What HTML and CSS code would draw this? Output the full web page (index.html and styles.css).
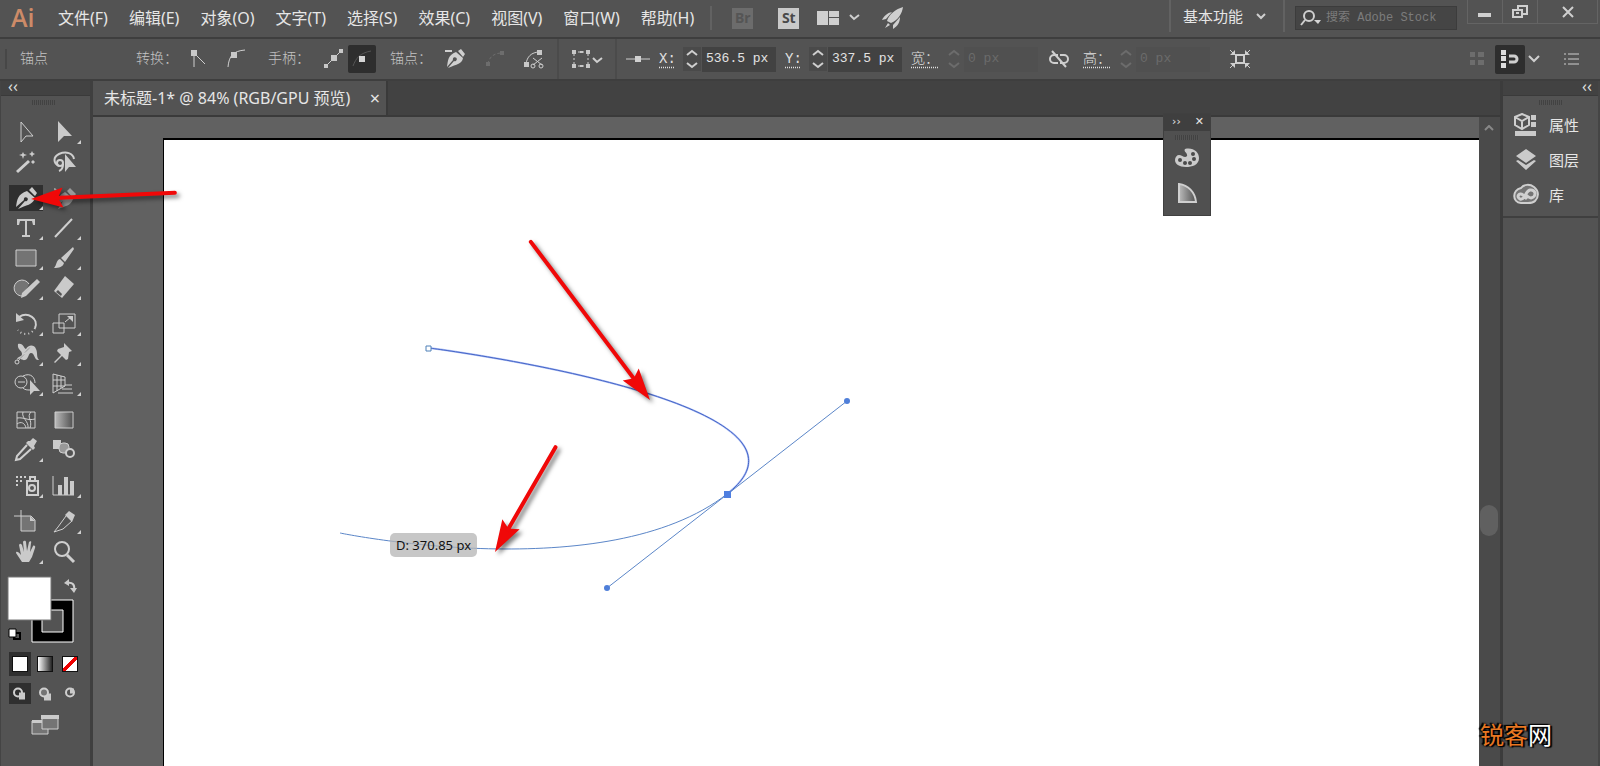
FILE: index.html
```html
<!DOCTYPE html>
<html lang="zh-CN">
<head>
<meta charset="utf-8">
<title>未标题-1</title>
<link rel="stylesheet" href="styles.css">
</head>
<body>
<header class="menubar">
  <div class="logo">Ai</div>
  <nav class="menus">
    <button>文件(F)</button><button>编辑(E)</button><button>对象(O)</button><button>文字(T)</button><button>选择(S)</button><button>效果(C)</button><button>视图(V)</button><button>窗口(W)</button><button>帮助(H)</button>
  </nav>
  <div class="apps">
    <button class="app dim">Br</button>
    <button class="app">St</button>
    <button class="arrange" aria-label="排列文档"><svg width="44" height="20" viewBox="0 0 44 20"><path fill="#cfcfcf" d="M0 3h11v14H0zM12 3h10v6H12zM12 10h10v7H12z"/><path class="ln w2" d="M33 7l4 4 5-4"/></svg></button>
    <button aria-label="GPU"><svg width="24" height="24" viewBox="0 0 24 24"><path fill="#cfcfcf" d="M22 1C15 3 8 8 6 15l4 2C17 14 21 8 22 1zM11 6c-5 1-8 4-10 8l4-1zM19 11l-7 8v4c5-3 7-7 7-12zM7 17l-3 5 5-3z"/></svg></button>
  </div>
  <div class="right">
    <button class="workspace">基本功能<svg width="12" height="8" viewBox="0 0 12 8"><path class="ln w2" d="M2 2l4 4 4-4"/></svg></button>
    <label class="search"><svg width="22" height="16" viewBox="0 0 22 16"><circle class="ln w2" cx="9" cy="6" r="5"/><path class="ln w2" d="M5 10l-4 5"/><path fill="#d5d5d5" d="M14 10h7l-3 4z"/></svg><input placeholder="搜索 Adobe Stock" aria-label="搜索 Adobe Stock"></label>
    <div class="winbtns">
      <button aria-label="最小化"><svg width="14" height="14" viewBox="0 0 14 14"><path fill="#d0d0d0" d="M0 8h13v4H0z"/></svg></button>
      <button aria-label="还原"><svg width="16" height="14" viewBox="0 0 16 14"><path class="ln w2" d="M6 5V1h9v8h-4M1 5h9v7H1zM4 8h3"/></svg></button>
      <button class="close" aria-label="关闭"><svg width="12" height="12" viewBox="0 0 12 12"><path class="ln w2" d="M1 1l10 10M11 1L1 11"/></svg></button>
    </div>
  </div>
</header>

<section class="control">
  <span class="mode">锚点</span>
  <span class="label">转换：</span>
  <button class="b22" aria-label="尖角"><svg width="22" height="22" viewBox="0 0 22 22"><path fill="#c8c8c8" d="M3 2h6v6H3z"/><path class="ln" d="M6 8v11M8 7l9 9"/></svg></button>
  <button class="b36" aria-label="平滑"><svg width="22" height="22" viewBox="0 0 22 22"><path class="ln" d="M3 19C4 8 8 3 20 2"/><path fill="#c8c8c8" d="M6 4h6v6H6z"/></svg></button>
  <span class="label">手柄：</span>
  <button class="b28" aria-label="显示手柄"><svg width="22" height="22" viewBox="0 0 22 22"><path class="ln" d="M3 18L18 3"/><path fill="#c8c8c8" d="M8 7h6v6H8zM16 1h4v4h-4zM1 16h4v4H1z"/></svg></button>
  <button class="b28 on" aria-label="隐藏手柄"><svg width="22" height="22" viewBox="0 0 22 22"><path fill="none" stroke="#555" d="M2 18C5 10 9 5 20 3"/><path fill="#d5d5d5" d="M8 8h6v6H8z"/></svg></button>
  <span class="label anchors">锚点：</span>
  <button class="b40" aria-label="删除锚点"><svg width="22" height="22" viewBox="0 0 22 22"><path fill="#cfcfcf" d="M1 2h7v2H1zM14 3l3-2 4 5-2 3zM12 4l7 6c-1 6-6 6-15 10l6-7a2 2 0 1 0-1-1l-6 7C4 12 4 7 12 4z"/></svg></button>
  <button class="b38" aria-label="连接端点"><svg width="20" height="20" viewBox="0 0 20 20"><path fill="none" stroke="#6d6d6d" stroke-dasharray="3 2" d="M3 15C4 8 9 4 17 4"/><path fill="#6d6d6d" d="M1 13h4v4H1zM15 2h4v4h-4z"/></svg></button>
  <button class="b38" aria-label="剪切路径"><svg width="22" height="22" viewBox="0 0 22 22"><path class="ln" d="M3 16C4 9 8 4 17 4M10 10l9 7M19 10l-9 7"/><path fill="#c8c8c8" d="M14 2h5v5h-5zM1 14h5v5H1z"/><circle class="ln" cx="10" cy="18" r="2"/><circle class="ln" cx="18" cy="18" r="2"/></svg></button>
  <button class="b60 bordered" aria-label="隔离"><svg width="32" height="22" viewBox="0 0 32 22"><path class="ln" stroke-dasharray="2 2" d="M3 4h14v14H3z"/><path fill="#c8c8c8" d="M1 2h4v4H1zM15 2h4v4h-4zM1 16h4v4H1zM15 16h4v4h-4zM9 3h3v2H9zM9 17h3v2H9z"/><path class="ln w2" d="M22 10l4 4 5-4"/></svg></button>
  <span class="b40 ref"><svg width="24" height="10" viewBox="0 0 24 10"><path class="ln" d="M0 5h24"/><path fill="#d0d0d0" d="M9 2h6v6H9z"/></svg></span>
  <div class="field"><label for="x">X:</label><svg width="18" height="24" viewBox="0 0 18 24"><path class="ln w2" d="M4 8l5-4 5 4M4 16l5 4 5-4"/></svg><input id="x" value="536.5 px"></div>
  <div class="field"><label for="y">Y:</label><svg width="18" height="24" viewBox="0 0 18 24"><path class="ln w2" d="M4 8l5-4 5 4M4 16l5 4 5-4"/></svg><input id="y" value="337.5 px"></div>
  <div class="field off"><label for="w">宽：</label><svg width="18" height="24" viewBox="0 0 18 24"><path class="ln w2" d="M4 8l5-4 5 4M4 16l5 4 5-4"/></svg><input id="w" value="0 px" disabled></div>
  <button class="b36 link" aria-label="约束比例"><svg width="20" height="18" viewBox="0 0 20 18"><path class="ln w2" d="M9 5H5a4 4 0 0 0 0 8h4M11 5h4a4 4 0 0 1 0 8h-4M3 1l14 16"/></svg></button>
  <div class="field off"><label for="h">高：</label><svg width="18" height="24" viewBox="0 0 18 24"><path class="ln w2" d="M4 8l5-4 5 4M4 16l5 4 5-4"/></svg><input id="h" value="0 px" disabled></div>
  <button class="b36 isolate" aria-label="变换"><svg width="22" height="20" viewBox="0 0 22 20"><path class="ln w2" d="M7 6h8v8H7z"/><path class="ln" d="M1 1l4 4M21 1l-4 4M1 19l4-4M21 19l-4-4"/><path fill="#d0d0d0" d="M6 1v5H1zM16 1v5h5zM6 19v-5H1zM16 19v-5h5z"/></svg></button>
  <div class="ctlend">
    <button class="b28" aria-label="对齐网格"><svg width="18" height="18" viewBox="0 0 18 18"><path fill="#6d6d6d" d="M2 2h5v5H2zM10 2h6v5h-6zM2 10h5v5H2zM10 10h6v5h-6z"/></svg></button>
    <button class="snap on" aria-label="对齐像素"><svg width="20" height="20" viewBox="0 0 20 20"><path fill="#ddd" d="M1 1h5v5H1zM1 7h5v5H1zM1 14h5v5H1z"/><path class="ln w3" d="M9 7h5a3 3 0 0 1 0 6H9"/></svg></button>
    <svg width="12" height="8" viewBox="0 0 12 8"><path class="ln w2" d="M1 1l5 5 5-5"/></svg>
    <button class="list" aria-label="面板菜单"><svg width="16" height="14" viewBox="0 0 16 14"><path class="ln" d="M4 2h11M4 7h11M4 12h11M0 2h2M0 7h2M0 12h2"/></svg></button>
  </div>
</section>

<main class="main">
  <aside class="tools">
    <div class="dockhead">‹‹</div>
    <div class="grip"></div>
    <div class="toolgrid">
      <button><svg viewBox="0 0 38 30"><path class="ln" d="M14 5v20l5-6h7z"/></svg></button>
      <button class="more"><svg viewBox="0 0 38 30"><path class="fl" d="M13 4v21l6-6h8z"/></svg></button>
      <button><svg viewBox="0 0 38 30"><path class="ln w3" d="M10 25l12-11"/><path class="fl" d="M16 5l1 2 3 1-3 1-1 3-1-3-3-1 3-1zM25 4l1 2 2 1-2 1-1 2-1-2-2-1 2-1zM26 13l2 2-2 2-2-2z"/></svg></button>
      <button><svg viewBox="0 0 38 30"><path class="ln w2" d="M14 19c-6-3-6-9 0-12 7-3 14-1 15 5"/><circle class="ln w2" cx="15" cy="16" r="3"/><path class="ln w2" d="M18 17c0 4-1 6-4 7"/><path class="fl" d="M20 7v18l4-5h7z"/></svg></button>
    </div>
    <div class="toolgrid">
      <button class="more active"><svg viewBox="0 0 38 30"><path class="fl" d="M22 7l3-3 5 6-2 3zM20 8l8 7c-2 7-9 7-17 11l7-8a2 2 0 1 0-1-1l-8 7c1-8 2-13 11-16z"/></svg></button>
      <button><svg viewBox="0 0 38 30"><g opacity=".6"><path class="fl" d="M22 8l3-3 6 6-3 4zM20 9l8 7c-2 7-8 7-15 10l5-8-6 5c1-8 2-11 8-14z"/><path class="ln w2" d="M9 6c4 0 2 8-2 9"/></g></svg></button>
      <button class="more"><svg viewBox="0 0 38 30"><path class="fl" d="M10 6h18v6h-2l-1-4h-5v14h3v2h-8v-2h3V8h-5l-1 4h-2z"/></svg></button>
      <button class="more"><svg viewBox="0 0 38 30"><path class="ln w2" d="M10 24L27 6"/></svg></button>
      <button class="more"><svg viewBox="0 0 38 30"><path class="ln shade" d="M9 7h20v16H9z"/></svg></button>
      <button class="more"><svg viewBox="0 0 38 30"><path class="fl" d="M28 4l1 2-9 13-4-4zM15 16l4 4c-1 4-5 5-10 5 3-3 2-8 6-9z"/></svg></button>
      <button class="more"><svg viewBox="0 0 38 30"><path class="ln shade" d="M16 23a8 8 0 1 1 6-12"/><path class="fl" d="M30 6l3 3-14 14-5 2 1-5z"/></svg></button>
      <button class="more"><svg viewBox="0 0 38 30"><path class="fl" d="M20 3l9 8-12 14-8-7z"/><path class="hole" d="M13 17l4 4-1 2-5-4z"/></svg></button>
    </div>
    <div class="toolgrid">
      <button class="more"><svg viewBox="0 0 38 30"><path class="ln w2" d="M12 8c9-6 20 2 16 11"/><path class="ln w2" stroke-dasharray="1 3" d="M28 19c-3 7-13 8-17 2"/><path class="fl" d="M9 4v9l8-2z"/></svg></button>
      <button class="more"><svg viewBox="0 0 38 30"><path class="ln" d="M14 5h16v14H14zM8 14h11v10H8zM20 13l6-5"/><path class="fl" d="M22 7h6v6z"/></svg></button>
      <button class="more"><svg viewBox="0 0 38 30"><path class="fl" d="M11 5c6-1 5 4 8 5 2-4 8-5 10 0 2 4 0 8 3 11-5 1-4-7-8-7-3 0-2 6-6 7-3 1-5-3-8 0 0-4 5-3 5-6 0-4-5-4-4-10z"/><path style="stroke:#535353" d="M12 21L23 8"/><path class="ln" d="M11 22L24 7"/><circle class="ln" cx="10" cy="23" r="2"/></svg></button>
      <button class="more"><svg viewBox="0 0 38 30"><path class="fl" d="M19 4l8 8-3 1-1 7-2 1-4-4-7 7-1-1 7-7-4-4 1-2 6-2z"/></svg></button>
      <button class="more"><svg viewBox="0 0 38 30"><circle class="ln" cx="14" cy="13" r="6"/><path class="ln" d="M16 7c8-4 12 2 12 7M16 19c2 2 4 2 7 2M11 13h7"/><path class="fl" d="M23 11v15l4-4h6z"/></svg></button>
      <button class="more"><svg viewBox="0 0 38 30"><path class="ln" d="M8 5v19M8 5l12 3v9L8 24M8 11h12M8 17h12M12 6v16M16 7v12M20 16h7M17 20h10M13 24h15"/></svg></button>
    </div>
    <div class="toolgrid">
      <button><svg viewBox="0 0 38 30"><path class="ln" d="M10 7h18v16H10z"/><path class="ln" d="M10 13c8-1 10 3 18 1M10 19c4-3 8-1 9 4M16 7c-2 6 6 9 5 16M24 7c-5 5 2 8-1 16"/></svg></button>
      <button><svg viewBox="0 0 38 30"><defs><linearGradient id="g"><stop stop-color="#bbb"/><stop offset="1" stop-color="#505050"/></linearGradient></defs><path stroke="#cfcfcf" fill="url(#g)" d="M10 7h18v16H10z"/></svg></button>
      <button class="more"><svg viewBox="0 0 38 30"><path class="fl" d="M23 6l3-3 4 3-3 5 1 2-2 2-7-7 2-2z"/><path class="ln w2" d="M20 10L10 21l-1 4 4-1 11-10"/></svg></button>
      <button><svg viewBox="0 0 38 30"><path class="fl" d="M8 5h8v9H8z"/><rect x="14" y="8" width="10" height="10" rx="4" fill="#999" stroke="#cfcfcf"/><circle class="ln w2 hole" cx="25" cy="18" r="4"/></svg></button>
    </div>
    <div class="toolgrid">
      <button class="more"><svg viewBox="0 0 38 30"><path class="ln w2" d="M20 10h11v14H20zM23 9V6h5v3"/><circle class="ln w2" cx="25" cy="17" r="3"/><path class="ln w2" stroke-dasharray="2 2" d="M9 6h10M9 10h8M9 14h3"/></svg></button>
      <button class="more"><svg viewBox="0 0 38 30"><path class="ln" d="M8 5v19h21"/><path class="fl" d="M13 14h4v10h-4zM19 6h4v18h-4zM25 10h4v14h-4z"/></svg></button>
    </div>
    <div class="toolgrid">
      <button><svg viewBox="0 0 38 30"><path class="ln shade" d="M14 9h10l4 4v11H14z"/><path class="ln" d="M14 3v6M7 9h7"/><path class="fl" d="M23 9v5h5z"/></svg></button>
      <button class="more"><svg viewBox="0 0 38 30"><path class="ln" d="M21 9L13 20l-4 5 9-3 9-8"/><path class="fl" d="M20 8l4-4 6 4-3 7z"/></svg></button>
      <button class="more"><svg viewBox="0 0 38 30"><path class="fl" d="M15 25l-6-9c0-2 2-2 5 2L12 8c1-2 2-1 3 0l2 7-1-10c1-2 3-1 3 0l1 9 2-9c1-1 3-1 2 1l-1 9 3-6c1-1 3 0 2 2l-3 9-3 5z"/></svg></button>
      <button><svg viewBox="0 0 38 30"><circle class="ln w2" cx="17" cy="12" r="7"/><path class="ln w3" d="M22 18l7 7"/></svg></button>
    </div>
    <svg class="swatches" viewBox="7 570 76 76" width="76" height="76"><path d="M32 600h41v42H32z" fill="#000" stroke="#fff"/><path d="M42 610h21v22H42z" fill="#535353" stroke="#fff"/><path fill="#fff" stroke="#777" d="M8 577h43v43H8z"/><path class="ln w2" d="M67 583c6-1 8 2 7 7"/><path class="fl" d="M64 583l5-4v7zM70 588h7l-3 5z"/><path stroke="#000" fill="#535353" stroke-width="2" d="M14 633h6v6h-6z"/><path stroke="#000" fill="#fff" stroke-width="1" d="M9 629h7v8H9z"/></svg>
    <div class="fills"><button class="sel" aria-label="颜色"><i></i></button><button aria-label="渐变"><i class="grad"></i></button><button aria-label="无"><i class="none"></i></button></div>
    <div class="draws">
      <button class="sel" aria-label="正常绘图"><svg viewBox="0 0 22 20"><circle class="ln w2" cx="9" cy="9" r="4"/><path class="fl" d="M10 9h6v7h-6z"/></svg></button>
      <button aria-label="背面绘图"><svg viewBox="0 0 22 20"><path class="fl" d="M10 10h7v7h-7z"/><circle class="ln w2 shade" cx="10" cy="9" r="4"/></svg></button>
      <button aria-label="内部绘图"><svg viewBox="0 0 22 20"><circle class="ln w2" cx="11" cy="9" r="4"/><path class="fl" d="M11 5h4v5h-4z"/></svg></button>
    </div>
    <button class="screen" aria-label="屏幕模式"><svg width="28" height="20" viewBox="0 0 28 20"><path class="ln shade" d="M1 6h16v13H1z"/><path class="fl" d="M1 5h10v3H1z"/><path class="ln shade" d="M11 2h16v12H11z"/><path class="fl" d="M10 0h18v4H10z"/></svg></button>
  </aside>

  <section class="doc">
    <div class="tabs"><div class="tab"><span>未标题-1* @ 84% (RGB/GPU 预览)</span><button aria-label="关闭">×</button></div></div>
    <div class="work">
      <div class="canvas">
        <div class="artboard">
          <svg class="drawing" width="1314" height="626" viewBox="164 140 1314 626">
            <path fill="none" stroke="#2f4a9c" d="M429 348C429 348 847 401 727 494"/>
            <path fill="none" stroke="#5b7ff0" opacity=".5" stroke-width="2" d="M429 348C429 348 847 401 727 494"/>
            <path fill="none" stroke="#5b86c8" d="M727 494C607 588 340 533 340 533M847 401L607 588"/>
            <path fill="#fff" stroke="#4f80b8" d="M426 346h5v5h-5z"/>
            <path fill="#4f7fe0" d="M724 491h7v7h-7z"/>
            <circle fill="#4f7fd9" cx="847" cy="401" r="3"/><circle fill="#4f7fd9" cx="607" cy="588" r="3"/>
          </svg>
          <div class="measure">D: 370.85 px</div>
        </div>
      </div>
      <div class="scroll"><svg width="10" height="6" viewBox="0 0 10 6"><path fill="none" stroke="#888" stroke-width="2" d="M1 5l4-4 4 4"/></svg><div class="thumb"></div></div>
    </div>
  </section>

  <aside class="dock">
    <div class="dockhead end">‹‹</div>
    <div class="panels">
      <div class="grip"></div>
      <button><svg width="26" height="24" viewBox="0 0 26 24"><path class="ln w2" d="M9 1l7 3v8l-7 4-7-4V4zM2 4l7 4 7-4M9 8v8"/><path class="fl" d="M18 2h5v5h-5zM18 9h5v5h-5zM2 18h21v5H2z"/></svg>属性</button>
      <button><svg width="26" height="24" viewBox="0 0 26 24"><path class="fl" d="M13 1l10 7-10 7L3 8zM3 13l2-1 8 5 8-5 2 1-10 9z"/></svg>图层</button>
      <button><svg width="26" height="24" viewBox="0 0 26 24"><path class="ln w2 shade" d="M8 5C11 1 17 1 21 4c5 4 5 10 1 14-2 2-4 2-7 2H8C-1 19-1 7 8 5z"/><path class="ln w3" d="M14 16l-4-4c-4-3-7 2-3 4 5 2 5-8 10-9 6-1 7 7 1 8-2 0-4-2-6-4"/></svg>库</button>
    </div>
  </aside>
</main>

<div class="float">
  <div class="fhead"><span>››</span><span>✕</span></div>
  <div class="grip"></div>
  <button aria-label="颜色"><svg width="26" height="20" viewBox="0 0 26 20"><path class="fl" d="M11 1c8-2 14 3 14 9 0 7-7 9-13 9C5 19 1 16 1 12c0-3 2-5 4-5 3 0 6 4 8 1 1-3-4-4-2-7z"/><g fill="#4a4a4a"><circle cx="6" cy="12" r="2"/><circle cx="11" cy="15" r="2"/><circle cx="16" cy="15" r="2"/><circle cx="20" cy="11" r="2"/><circle cx="19" cy="6" r="2"/></g></svg></button>
  <button aria-label="颜色参考"><svg width="22" height="22" viewBox="0 0 22 22"><path fill="url(#g)" stroke="#cfcfcf" stroke-width="2" d="M3 2c9 1 16 8 17 18H3z"/></svg></button>
</div>

<svg class="arrows" width="1600" height="766" viewBox="0 0 1600 766">
  <defs><path id="head" d="M0 0L32-10 28-2V2L32 10z"/></defs>
  <g fill="#f00808" stroke="none">
    <g transform="translate(31 199) rotate(-2.5)"><use href="#head"/><path d="M24-2h120a2 2 0 0 1 0 4H24z"/></g>
    <g transform="translate(650 400) rotate(233)"><use href="#head"/><path d="M24-2h174a2 2 0 0 1 0 4H24z"/></g>
    <g transform="translate(495 552) rotate(-60)"><use href="#head"/><path d="M24-2h97a2 2 0 0 1 0 4H24z"/></g>
  </g>
</svg>
<div class="mark"><b>锐客</b>网</div>
</body>
</html>
```
FILE: styles.css
```css
* { box-sizing: border-box; }
body {
  margin: 0; height: 100vh; overflow: hidden; position: relative;
  display: flex; flex-direction: column;
  background: #535353; color: #e6e6e6;
  font: 15px/20px "Noto Sans", "Noto Sans CJK SC", sans-serif;
}
button { background: none; border: 0; padding: 0; margin: 0; color: inherit; font: inherit; display: flex; align-items: center; justify-content: center; flex: none; }
svg { display: block; flex: none; }
.ln { fill: none; stroke: #cfcfcf; stroke-width: 1; }
.w2 { stroke-width: 2; }
.w3 { stroke-width: 3; }
.fl { fill: #cacaca; }
.shade { fill: #747474; }
.hole { fill: #535353; }

.menubar { height: 39px; display: flex; border-bottom: 2px solid #3e3e3e; flex: none; }
.logo { width: 58px; padding-left: 11px; font: 600 25px/34px "Open Sans", sans-serif; color: #cd8b68; }
.menus { display: flex; gap: 21px; height: 36px; align-items: center; font-size: 16px; }
.apps { display: flex; align-items: center; height: 36px; margin-left: 16px; gap: 20px; }
.apps::before { content: ""; width: 2px; height: 24px; background: #626262; }
.app { width: 21px; height: 21px; margin-right: 5px; background: #c9c9c9; color: #4a4a4a; font-weight: bold; font-size: 14px; }
.app.dim { background: #6c6c6c; color: #555; }
.arrange { margin-left: -7px; }
.right { margin-left: auto; display: flex; align-items: flex-start; }
.workspace { height: 32px; padding: 0 16px 0 12px; border-left: 2px solid #626262; border-right: 2px solid #626262; gap: 12px; }
.search { display: flex; align-items: center; width: 162px; height: 24px; margin: 6px 10px 0; background: #454545; border: 1px solid #3c3c3c; padding-left: 4px; }
.search input { width: 128px; border: 0; background: none; padding: 0 4px; font: 12px "Liberation Mono", "Noto Sans CJK SC", monospace; }
.search input::placeholder { color: #7c7c7c; opacity: 1; }
.winbtns { display: flex; height: 24px; border: 1px solid #646464; border-top: 0; margin-right: 2px; }
.winbtns button { width: 35px; border-right: 1px solid #646464; }
.winbtns .close { width: 59px; border: 0; }

.control { height: 42px; flex: none; display: flex; align-items: center; border-bottom: 2px solid #3e3e3e; color: #c4c4c4; font-family: "Liberation Mono", "Noto Sans CJK SC", monospace; font-weight: 300; font-size: 14px; }
.mode { width: 117px; margin-left: 5px; padding-left: 13px; border-left: 2px solid #474747; }
.label { width: 52px; margin-left: 14px; white-space: nowrap; }
.anchors { width: 45px; }
.b22 { width: 22px; }
.b28 { width: 28px; height: 28px; }
.b36 { width: 36px; margin-left: 8px; }
.b38 { width: 39px; }
.b40 { width: 40px; display: flex; justify-content: center; }
.b60 { width: 60px; height: 40px; margin-left: 4px; }
.bordered { border-left: 2px solid #4b4b4b; border-right: 2px solid #4b4b4b; }
.ref { width: 42px; }
.on { background: #2e2e2e; border-radius: 2px; }
.field { display: flex; align-items: center; }
.field label { width: 24px; color: #e0e0e0; text-decoration: underline dotted; text-underline-offset: 4px; white-space: nowrap; }
.field svg { width: 18px; background: #4a4a4a; }
.field input { width: 74px; height: 25px; margin: 0 9px 0 1px; padding: 0 0 2px 4px; border: 0; background: #424242; color: #e2e2e2; font: 13px "Liberation Mono", monospace; border-radius: 0; }
.off label { width: 34px; }
.off svg { background: none; opacity: .2; }
.off input { background: #505050; color: #6b6b6b; padding-left: 4px; margin-right: 0; }
.link { margin: 0 6px 0 3px; }
.isolate { margin-left: 12px; }
.ctlend { margin-left: auto; display: flex; align-items: center; padding-right: 20px; }
.ctlend .b28 { margin-right: 4px; }
.snap { width: 30px; height: 29px; margin-right: 3px; }
.list { margin-left: 24px; }

.main { flex: 1; min-height: 0; display: flex; }
.tools { width: 93px; flex: none; display: flex; flex-direction: column; border-right: 3px solid #3f3f3f; border-left: 1px solid #444; }
.dockhead { height: 15px; flex: none; background: #424242; border-bottom: 1px solid #3a3a3a; padding-left: 7px; font: 16px/11px "Noto Sans", sans-serif; color: #ddd; }
.dockhead.end { text-align: right; padding-right: 6px; }
.grip { width: 24px; height: 5px; flex: none; margin: 4px auto 0; background: repeating-linear-gradient(90deg, #424242 0 1px, #535353 1px 2px); }
.tools .grip { margin: 4px 0 12px 31px; }
.toolgrid { display: grid; grid-template-columns: 38px 38px; grid-auto-rows: 30px; padding-left: 6px; margin-bottom: 6px; flex: none; }
.toolgrid button { position: relative; }
.toolgrid svg { width: 38px; height: 30px; }
.more::after { content: ""; position: absolute; right: 2px; bottom: 3px; border: solid transparent; border-width: 0 0 4px 4px; border-bottom-color: #d0d0d0; }
.active::before { content: ""; position: absolute; inset: 2px; background: #2f2f2f; }
.active svg { position: relative; }
.swatches { margin: -3px 0 6px 6px; }
.fills, .draws { display: flex; gap: 3px; padding-left: 8px; margin-bottom: 7px; }
.fills button { width: 22px; height: 24px; }
.fills .sel, .draws .sel { background: #2f2f2f; }
.fills i { width: 16px; height: 16px; background: #fff; border: 1px solid #111; }
.fills .grad { background: linear-gradient(90deg, #fff, #222); }
.fills .none { background: linear-gradient(135deg, #fff 42%, #e00 42% 58%, #fff 58%); }
.draws button, .draws svg { width: 22px; height: 21px; }
.draws { margin-bottom: 11px; }
.screen { margin-left: 30px; align-self: flex-start; }

.doc { flex: 1; min-width: 0; display: flex; flex-direction: column; }
.tabs { height: 36px; flex: none; background: #424242; border-bottom: 2px solid #3a3a3a; display: flex; }
.tab { width: 295px; display: flex; align-items: center; justify-content: space-between; padding: 0 6px 0 11px; background: #535353; border-right: 2px solid #3a3a3a; font-size: 16px; }
.tab span { white-space: pre; }
.tab button { font-size: 18px; }
.work { flex: 1; min-height: 0; display: flex; }
.canvas { flex: 1; min-width: 0; background: #616161; padding: 21px 0 0 70px; display: flex; }
.artboard { flex: 1; min-width: 0; background: #fff; border: solid #000; border-width: 2px 0 0 1px; position: relative; overflow: hidden; }
.drawing { position: absolute; left: 0; top: 0; }
.measure { position: absolute; left: 226px; top: 393px; height: 24px; padding: 0 6px; border-radius: 5px; background: rgba(180, 180, 180, .75); color: #111; font-size: 13px; line-height: 24px; }
.scroll { width: 21px; flex: none; background: #4a4a4a; padding: 8px 5px; position: relative; }
.thumb { position: absolute; left: 1px; top: 388px; width: 18px; height: 31px; border-radius: 9px; background: #606060; }

.dock { width: 100px; flex: none; border-left: 3px solid #3c3c3c; border-right: 2px solid #454545; }
.panels { border-bottom: 2px solid #3f3f3f; padding-bottom: 4px; }
.panels .grip { margin-bottom: 2px; }
.panels button { height: 35px; width: 100%; padding-left: 10px; gap: 10px; justify-content: flex-start; }

.float { position: absolute; left: 1163px; top: 113px; width: 48px; height: 103px; background: #505050; border: 1px solid #404040; }
.fhead { height: 17px; background: #3f3f3f; display: flex; justify-content: space-between; padding: 0 6px 0 8px; font: 11px/15px "DejaVu Sans", sans-serif; }
.float button { width: 100%; height: 35px; }
.arrows { position: absolute; left: 0; top: 0; pointer-events: none; filter: drop-shadow(3px 3px 2px rgba(0, 0, 0, .5)); }
.mark { position: absolute; right: 48px; bottom: 15px; font: 24px/34px "Noto Sans CJK SC", sans-serif; color: #fff; text-shadow: 0 0 2px #000, 0 0 2px #000, 2px 1px 1px #000, -2px -1px 1px #000; }
.mark b { font-weight: 400; color: #e87722; }
```
